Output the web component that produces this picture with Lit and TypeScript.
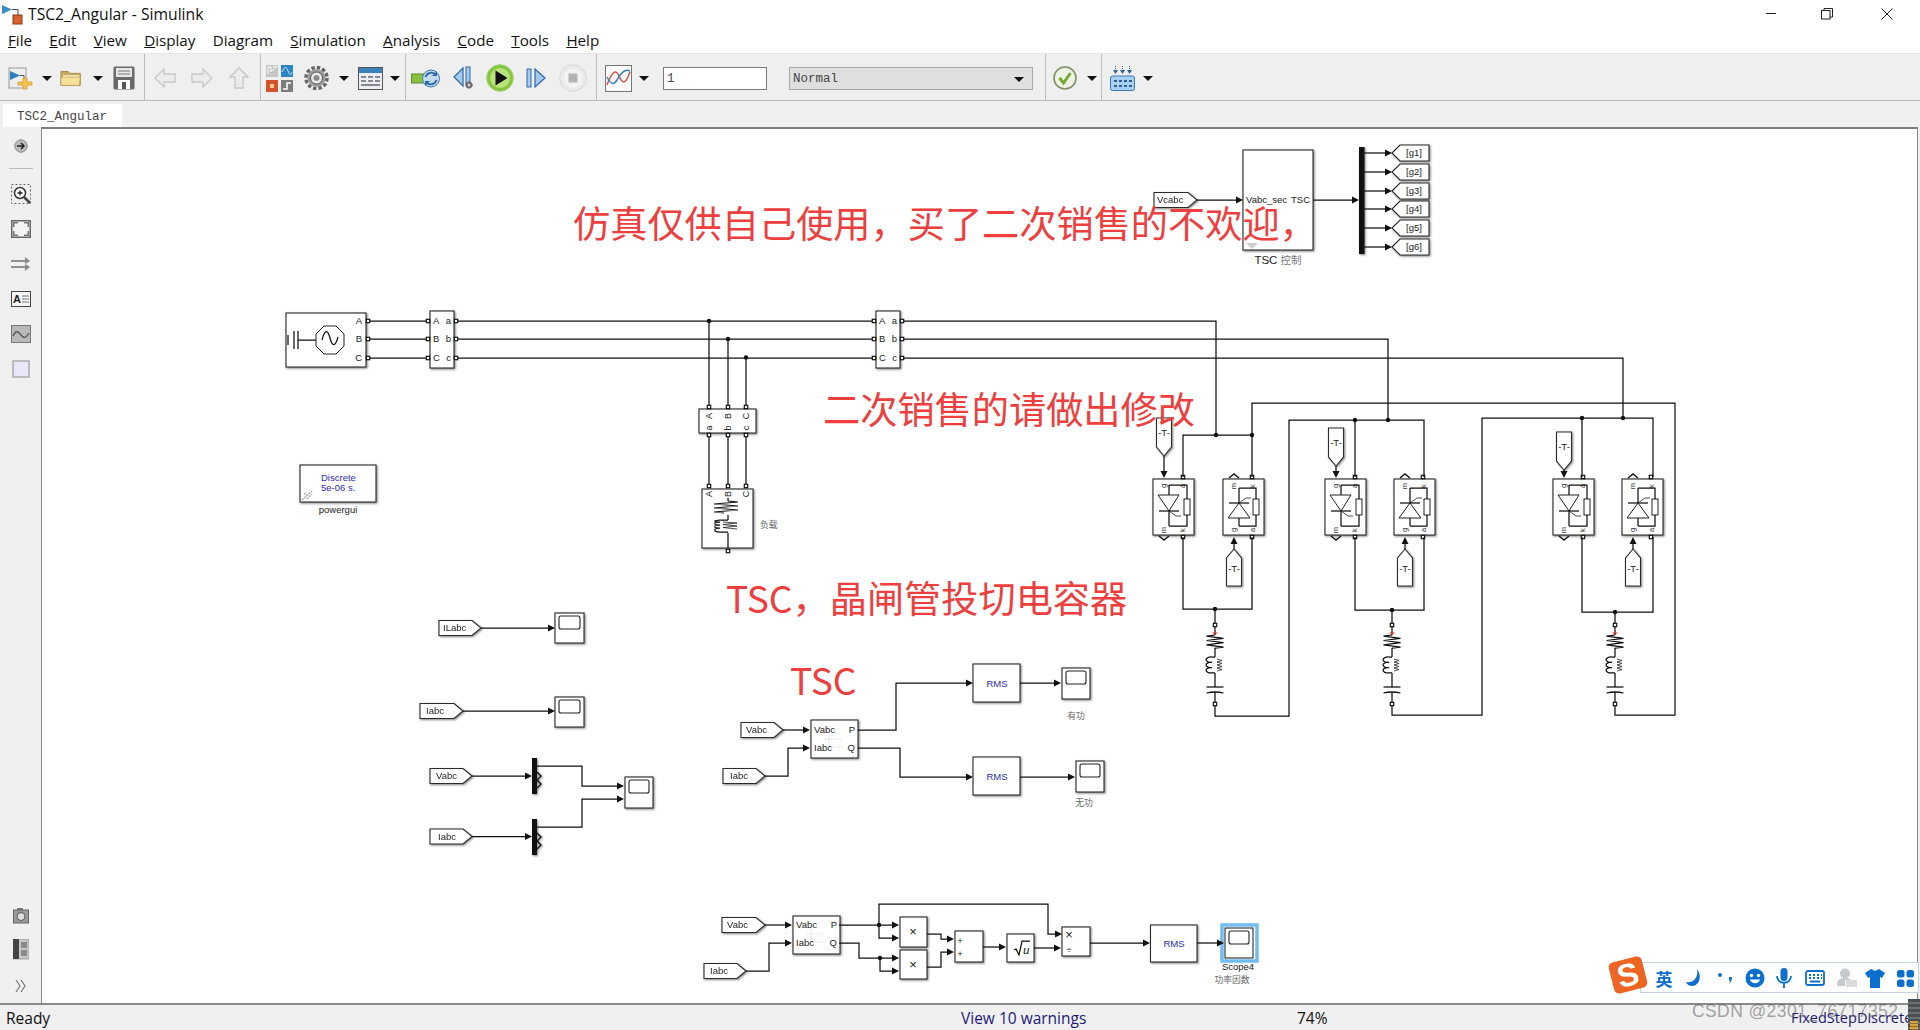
import { LitElement, html, svg, css } from 'lit'
import { customElement } from 'lit/decorators.js'

// ---- diagram helpers (page coordinates, the svg viewBox starts at the canvas corner) ----
const wire = (pts: string) => svg`<polyline class="w" points=${pts}></polyline>`
const dot = (x: number, y: number) => svg`<circle class="dot" cx=${x} cy=${y} r="2.2"></circle>`
const port = (x: number, y: number) => svg`<rect class="port" x=${x - 1.7} y=${y - 1.7} width="3.4" height="3.4"></rect>`
const arrR = (x: number, y: number) => svg`<polygon class="dot" points="${x},${y} ${x - 7},${y - 3.5} ${x - 7},${y + 3.5}"></polygon>`
const arrD = (x: number, y: number) => svg`<polygon class="dot" points="${x},${y} ${x - 3.5},${y - 7} ${x + 3.5},${y - 7}"></polygon>`
const arrU = (x: number, y: number) => svg`<polygon class="dot" points="${x},${y} ${x - 3.5},${y + 7} ${x + 3.5},${y + 7}"></polygon>`
const box = (x: number, y: number, w: number, h: number) => svg`<rect class="b" x=${x} y=${y} width=${w} height=${h}></rect>`
const txt = (x: number, y: number, s: string, cls = 't', anchor = 'start') =>
  svg`<text class=${cls} x=${x} y=${y} text-anchor=${anchor}>${s}</text>`
const rot = (x: number, y: number, s: string, size = 'r8') =>
  svg`<text class=${size} text-anchor="middle" transform="translate(${x} ${y}) rotate(-90)">${s}</text>`

const tagR = (x: number, y: number, w: number, label: string, lx: number) => svg`
  <polygon class="b" points="${x},${y - 7.5} ${x + w - 9},${y - 7.5} ${x + w},${y} ${x + w - 9},${y + 7.5} ${x},${y + 7.5}"></polygon>
  ${txt(x + lx, y + 3, label)}`
const tagL = (y: number, label: string) => svg`
  <polygon class="b" points="1391,${y} 1399,${y - 8} 1428,${y - 8} 1428,${y + 8} 1399,${y + 8}"></polygon>
  ${txt(1413, y + 3, label, 't', 'middle')}`
const scope = (x: number, y: number, w = 29, h = 30) => svg`
  ${box(x, y, w, h)}
  <rect class="scr" x=${x + 4} y=${y + 3} width=${w - 8} height="13" rx="2"></rect>`

const zig = (cx: number, y: number, hw: number, n: number, step: number) => {
  let p = `${cx},${y}`
  for (let i = 0; i < n; i++) p += ` ${cx + (i % 2 ? hw : -hw)},${y + step * (i + 0.5)}`
  return p + ` ${cx},${y + step * n}`
}

const rlc = (cx: number) => svg`
  ${port(cx, 625)}${port(cx, 704)}
  ${wire(`${cx},627 ${cx},635`)}
  <path class="plus" d="M${cx - 2.5} 633h5M${cx} 631v4"></path>
  <polyline class="w" points=${zig(cx, 635, 8.5, 6, 2.2)}></polyline>
  ${wire(`${cx},648 ${cx},657`)}
  <path class="w" d="M${cx} 657h-3a5 2.700 0 1 0 0 5.300a5 2.700 0 1 0 0 5.300a5 2.700 0 1 0 0 5.300h3"></path>
  <polyline class="thin" points=${`${cx + 2},659 ${cx + 7},660.5 ${cx + 2},662 ${cx + 7},663.5 ${cx + 2},665 ${cx + 7},666.5 ${cx + 2},668 ${cx + 7},669.5 ${cx + 2},671`}></polyline>
  ${wire(`${cx},673 ${cx},687`)}
  ${wire(`${cx - 8.5},687 ${cx + 8.5},687`)}
  <path class="w" d="M${cx - 8.5} 693q8.500 -2 17 0"></path>
  ${wire(`${cx},692 ${cx},702`)}`

// thyristor with snubber, triangle pointing down (gate tag above)
const thyDown = (x: number, tagY: number) => {
  const y = 479
  const gx = x + 11
  return svg`
  <g class="sh">
    <polygon class="b" points="${gx - 7.500},${tagY} ${gx + 7.500},${tagY} ${gx + 7.500},${tagY + 29} ${gx},${tagY + 38} ${gx - 7.500},${tagY + 29}"></polygon>
    ${box(x, y, 41, 56)}
  </g>
  ${txt(gx, tagY + 18, '-T-', 't', 'middle')}
  ${wire(`${gx},${tagY + 38} ${gx},${y - 4}`)}${arrD(gx, y - 1)}
  <path class="chev" d="M${gx - 5} ${y + 57}l5 4l5 -4"></path>
  ${rot(gx + 2, y + 7, 'g')}${rot(x + 32, y + 7, 'a')}${rot(gx + 2, y + 51, 'm')}${rot(x + 32, y + 51, 'k')}
  <polygon class="sym" points="${x + 5},${y + 16} ${x + 26},${y + 16} ${x + 16},${y + 32}"></polygon>
  ${wire(`${x + 6},${y + 32} ${x + 26},${y + 32}`)}
  ${wire(`${x + 16},${y + 6} ${x + 16},${y + 16}`)}${wire(`${x + 16},${y + 32} ${x + 16},${y + 47}`)}
  ${wire(`${x + 16},${y + 6} ${x + 34},${y + 6} ${x + 34},${y + 20}`)}
  ${wire(`${x + 34},${y + 36} ${x + 34},${y + 47} ${x + 16},${y + 47}`)}
  <rect class="sym" x=${x + 31} y=${y + 20} width="6" height="16"></rect>
  <path class="thin" d="M${x + 16} ${y + 32}l7 5h5"></path>
  ${port(x + 30, y - 2)}${port(x + 30, y + 58)}`
}

// same device turned over, gate tag below
const thyUp = (x: number) => {
  const y = 479
  const gx = x + 11
  return svg`
  <g class="sh">
    <polygon class="b" points="${gx},549 ${gx + 7.500},558 ${gx + 7.500},586 ${gx - 7.500},586 ${gx - 7.500},558"></polygon>
    ${box(x, y, 41, 56)}
  </g>
  ${txt(gx, 572, '-T-', 't', 'middle')}
  ${wire(`${gx},549 ${gx},${y + 62}`)}${arrU(gx, y + 58)}
  <path class="chev" d="M${gx - 5} ${y - 1}l5 -4l5 4"></path>
  ${rot(gx + 2, y + 7, 'm')}${rot(x + 32, y + 7, 'k')}${rot(gx + 2, y + 51, 'g')}${rot(x + 32, y + 51, 'a')}
  <polygon class="sym" points="${x + 5},${y + 39} ${x + 27},${y + 39} ${x + 16},${y + 24}"></polygon>
  ${wire(`${x + 6},${y + 24} ${x + 26},${y + 24}`)}
  ${wire(`${x + 16},${y + 9} ${x + 16},${y + 24}`)}${wire(`${x + 16},${y + 39} ${x + 16},${y + 47}`)}
  ${wire(`${x + 16},${y + 9} ${x + 33},${y + 9} ${x + 33},${y + 20}`)}
  ${wire(`${x + 33},${y + 36} ${x + 33},${y + 47} ${x + 16},${y + 47}`)}
  <rect class="sym" x=${x + 30} y=${y + 20} width="6" height="16"></rect>
  <path class="thin" d="M${x + 16} ${y + 24}l7 -5h5"></path>
  ${port(x + 29, y - 2)}${port(x + 29, y + 58)}`
}

const demuxSmall = (y: number) => svg`
  <rect class="dot" x="531" y=${y} width="5" height="36"></rect>
  <path class="chev" d="M536 ${y + 14}l4 4l-4 4l4 4l-4 4"></path>`

const pqBlock = (x: number, y: number, vy: number, qy: number) => svg`
  <g class="sh">${box(x, y, 47, qy - vy + 20)}</g>
  <path class="faint" d="M${x + 14} ${vy + 9}h16M${x + 18} ${vy + 5}v12h14"></path>
  ${txt(x + 3, vy + 3, 'Vabc')}${txt(x + 3, qy + 3, 'Iabc')}
  ${txt(x + 44, vy + 3, 'P', 't', 'end')}${txt(x + 44, qy + 3, 'Q', 't', 'end')}`

function diagram() {
  return svg`
  <!-- TSC controller and pulse tags -->
  <g class="sh">
    ${tagR(1153, 200, 43, 'Vcabc', 3)}
    ${box(1242, 150, 70, 100)}
    <rect class="dot" x="1358" y="147" width="5.500" height="107"></rect>
    ${[153, 172, 191, 209, 228, 247].map((y) => tagL(y, ''))}
  </g>
  ${[153, 172, 191, 209, 228, 247].map((y, i) => svg`
    ${wire(`1363,${y} 1386,${y}`)}${arrR(1391, y)}
    ${txt(1413, y + 3, `[g${i + 1}]`, 't', 'middle')}`)}
  ${wire('1196,200 1236,200')}${arrR(1242, 200)}
  ${wire('1312,200 1352,200')}${arrR(1358, 200)}
  ${txt(1245, 203, 'Vabc_sec')}${txt(1309, 203, 'TSC', 't', 'end')}
  <polygon class="mask" points="1245,243 1257,243 1251,249"></polygon>
  <text class="lb" x="1277" y="264" text-anchor="middle">TSC <tspan class="lbz">控制</tspan></text>

  <!-- source, breakers and three phase bus -->
  <g class="sh">
    ${box(285, 313, 80, 54)}
    ${box(429, 311, 24, 57)}
    ${box(875, 311, 24, 57)}
    ${box(698, 409, 57, 24)}
    ${box(701, 489, 51, 59)}
    ${box(299, 465, 76, 37)}
  </g>
  ${[[321, 'A', 'a'], [339, 'B', 'b'], [358, 'C', 'c']].map(([y, U, l]) => svg`
    ${txt(361, (y as number) + 3, U as string, 't', 'end')}
    ${wire(`369,${y} 426,${y}`)}${wire(`457,${y} 872,${y}`)}
    ${port(367, y as number)}${port(427, y as number)}${port(455, y as number)}${port(873, y as number)}${port(901, y as number)}
    ${txt(432, (y as number) + 3, U as string)}${txt(450, (y as number) + 3, l as string, 't', 'end')}
    ${txt(878, (y as number) + 3, U as string)}${txt(896, (y as number) + 3, l as string, 't', 'end')}`)}
  ${wire('903,321 1215,321 1215,435')}
  ${wire('903,339 1387,339 1387,420')}
  ${wire('903,358 1622,358 1622,418')}
  <path class="w" d="M287 345v-10M293 331v18M297 331v18M297 340h18"></path>
  <polygon class="sym" points="323,326 335,326 343,334 343,346 335,354 323,354 315,346 315,334"></polygon>
  <path class="w" d="M321 340c3 -12 6 -10 8 -2s5 10 8 -1"></path>

  <!-- load branch -->
  ${[[708, 'A', 'a'], [727, 'B', 'b'], [745, 'C', 'c']].map(([x, U, l]) => svg`
    ${dot(x as number, 321 + ((x as number) === 727 ? 18 : (x as number) === 745 ? 36.500 : 0))}
    ${wire(`${x},${(x as number) === 708 ? 321 : (x as number) === 727 ? 339 : 357} ${x},405`)}
    ${wire(`${x},437 ${x},484`)}
    ${port(x as number, 407)}${port(x as number, 435)}${port(x as number, 486)}
    ${rot((x as number) + 3, 416, U as string, 'r9')}${rot((x as number) + 3, 428, l as string, 'r9')}
    ${rot((x as number) + 3, 494, U as string, 'r9')}`)}
  ${port(727, 551)}
  ${wire('727,498 727,501')}
  <path class="w" d="M727 501l10 1l-24 2l24 2l-24 2l24 2l-24 2l10 1M727 515v5M727 520h-8c-7 0-7 2 0 2c-7 0-7 3 0 3c-7 0-7 3 0 3c-7 0-7 4 0 4h8M727 533v15"></path>
  <path class="thin" d="M722 522l14 1l-14 1.500l14 1.500l-14 1.500l14 1.500"></path>
  <text class="cn" x="759" y="528">负载</text>

  <!-- powergui -->
  <text class="bl" x="320" y="481">Discrete</text>
  <text class="bl" x="320" y="491">5e-06 s.</text>
  <text class="lb small" x="337" y="513" text-anchor="middle">powergui</text>
  <path class="link" d="M301 500l10 -9M303 493l3 3M306 499l5 -5"></path>

  <!-- capacitor banks -->
  ${thyDown(1152, 418)}${thyUp(1222)}
  ${thyDown(1324, 428)}${thyUp(1393)}
  ${thyDown(1552, 432)}${thyUp(1621)}
  ${wire('1182,477 1182,435 1251,435 1251,477')}
  ${wire('1251,435 1251,403 1674,403 1674,715 1614,715 1614,706')}
  ${wire('1182,537 1182,609 1251,609 1251,537')}
  ${wire('1214,609 1214,623')}
  ${wire('1214,706 1214,716 1288,716 1288,420 1423,420 1423,477')}
  ${wire('1354,420 1354,477')}
  ${wire('1354,537 1354,610 1423,610 1423,537')}
  ${wire('1391,610 1391,623')}
  ${wire('1391,706 1391,715 1481,715 1481,418 1652,418 1652,477')}
  ${wire('1581,418 1581,477')}
  ${wire('1581,537 1581,612 1652,612 1652,537')}
  ${wire('1614,612 1614,623')}
  ${[[1215, 435], [1251, 435], [1214, 609], [1354, 420], [1387, 420], [1391, 610], [1581, 418], [1622, 418], [1614, 612]].map(([x, y]) => dot(x, y))}
  ${rlc(1214)}${rlc(1391)}${rlc(1614)}

  <!-- scopes on the left -->
  <g class="sh">
    ${tagR(438, 628, 42, 'ILabc', 4)}
    ${tagR(419, 711, 43, 'Iabc', 6)}
    ${tagR(429, 776, 42, 'Vabc', 6)}
    ${tagR(429, 836.5, 42, 'Iabc', 8)}
    ${scope(554, 613)}${scope(554, 697)}${scope(624, 777, 28, 31)}
  </g>
  ${wire('480,628 548,628')}${arrR(554, 628)}
  ${wire('462,711 548,711')}${arrR(554, 711)}
  ${wire('471,776 525,776')}${arrR(531, 776)}
  ${wire('471,836.500 525,836.500')}${arrR(531, 836.5)}
  <g class="sh">${demuxSmall(758)}${demuxSmall(819)}</g>
  ${wire('536,766 581,766 581,786 617,786')}${arrR(623, 786)}
  ${wire('536,827 581,827 581,799 617,799')}${arrR(623, 799)}

  <!-- active and reactive power -->
  <g class="sh">
    ${tagR(740, 730, 42, 'Vabc', 5)}
    ${tagR(722, 776, 42, 'Iabc', 7)}
    ${box(972, 664, 47, 38)}${box(972, 757, 47, 38)}
    ${scope(1061, 668, 28, 31)}${scope(1075, 761, 28, 31)}
  </g>
  ${pqBlock(810, 720, 730, 748)}
  ${wire('782,730 803,730')}${arrR(809, 730)}
  ${wire('764,776 787,776 787,748 803,748')}${arrR(809, 748)}
  ${wire('857,730 895,730 895,683 966,683')}${arrR(972, 683)}
  ${wire('857,748 899,748 899,777 966,777')}${arrR(972, 777)}
  ${wire('1019,683 1054,683')}${arrR(1060, 683)}
  ${wire('1019,777 1068,777')}${arrR(1074, 777)}
  ${txt(996, 687, 'RMS', 'bl', 'middle')}${txt(996, 780, 'RMS', 'bl', 'middle')}
  <text class="cn" x="1075" y="719" text-anchor="middle">有功</text>
  <text class="cn" x="1083" y="806" text-anchor="middle">无功</text>

  <!-- power factor chain -->
  <g class="sh">
    ${tagR(721, 925, 43, 'Vabc', 5)}
    ${tagR(703, 971, 42, 'Iabc', 6)}
    ${box(899, 917, 27, 30)}${box(899, 950, 27, 29)}
    ${box(954, 931, 28, 31)}${box(1006, 934, 27, 28)}
    ${box(1061, 927, 28, 29)}${box(1149.5, 925, 46.5, 37)}
  </g>
  <rect class="sel" x="1221" y="925" width="35" height="36"></rect>
  ${scope(1224, 928, 28, 30)}
  ${pqBlock(792, 916, 925, 943)}
  ${wire('764,925 785,925')}${arrR(791, 925)}
  ${wire('745,971 768,971 768,943 785,943')}${arrR(791, 943)}
  ${wire('838,925 892,925')}${arrR(898, 925)}
  ${wire('878,925 878,938 892,938')}${arrR(898, 938)}
  ${wire('878,925 878,904 1047,904 1047,934 1055,934')}${arrR(1061, 934)}
  ${wire('838,943 858,943 858,958 892,958')}${arrR(898, 958)}
  ${wire('879,958 879,971 892,971')}${arrR(898, 971)}
  ${dot(878, 925)}${dot(879, 958)}
  ${wire('926,934 940,934 940,939 947,939')}${arrR(953, 939)}
  ${wire('926,967 940,967 940,952 947,952')}${arrR(953, 952)}
  ${wire('982,947 999,947')}${arrR(1005, 947)}
  ${wire('1033,948 1054,948')}${arrR(1060, 948)}
  ${wire('1089,943 1143,943')}${arrR(1149, 943)}
  ${wire('1196,943 1217,943')}${arrR(1223, 943)}
  ${txt(912, 936, '×', 'op', 'middle')}${txt(912, 969, '×', 'op', 'middle')}
  ${txt(959, 944, '+', 't', 'middle')}${txt(959, 957, '+', 't', 'middle')}
  ${txt(1068, 939, '×', 'op', 'middle')}${txt(1068, 953, '÷', 't', 'middle')}
  <path class="w" d="M1013 950l2 -1l3 6l3 -14h8"></path>
  <text class="u" x="1022" y="954">u</text>
  ${txt(1173, 947, 'RMS', 'bl', 'middle')}
  ${txt(1237, 970, 'Scope4', 't', 'middle')}
  <text class="cn" x="1231" y="983" text-anchor="middle">功率因数</text>

  <!-- annotations typed over the model -->
  <text class="note" x="572" y="238">仿真仅供自己使用，买了二次销售的不欢迎，</text>
  <text class="note" x="822" y="424">二次销售的请做出修改</text>
  <text class="note" x="725" y="613">TSC，晶闸管投切电容器</text>
  <text class="note" x="789" y="695">TSC</text>`
}

// ---- toolbar icons ----
const ic = (w: number, h: number, body: unknown) => html`<svg width=${w} height=${h} viewBox="0 0 ${w} ${h}">${body}</svg>`

const ICONS = {
  drop: ic(10, 5, svg`<path d="M0 0h10L5 5z" fill="#111"/>`),
  newModel: ic(25, 23, svg`
    <rect x="1" y="1" width="17" height="20" fill="#eee" stroke="#999"/>
    <path d="M2 4l10 4.500L2 13z" fill="#2f7fc1"/><path d="M12 8.500h4v6" fill="none" stroke="#555"/>
    <path d="M15 11h4v4h5v3h-5v4h-4v-4h-5v-3h5z" fill="#f6c64a" stroke="#c89628" stroke-width=".7"/>`),
  folder: ic(26, 18, svg`
    <path d="M1 2h8l2 2h11v13H1z" fill="#c8a860" stroke="#a58b4a"/>
    <path d="M3 6h18v10H3z" fill="#fff3c8"/><path d="M1 8h21l-1 9H1z" fill="#f6e09a" stroke="#b09653" stroke-width=".7"/>`),
  save: ic(22, 24, svg`
    <rect x=".5" y=".5" width="21" height="23" rx="1.500" fill="#6a6a6a"/>
    <rect x="3" y="2" width="16" height="9" fill="#e9e9e9"/><path d="M5 5h12M5 8h12" stroke="#777"/>
    <rect x="5" y="14" width="12" height="9" fill="#fafafa"/><rect x="9" y="16" width="4" height="7" fill="#555"/>`),
  back: ic(22, 20, svg`<path d="M1 10l9 -9v5h11v8H10v5z" fill="#ececec" stroke="#c6c6c6" stroke-width="1.300"/>`),
  forward: ic(22, 20, svg`<path d="M21 10l-9 -9v5H1v8h11v5z" fill="#ececec" stroke="#c6c6c6" stroke-width="1.300"/>`),
  up: ic(20, 22, svg`<path d="M10 1l9 9h-5v11H6V10H1z" fill="#ececec" stroke="#c6c6c6" stroke-width="1.300"/>`),
  library: ic(28, 28, svg`
    <rect x="0" y="1" width="12" height="12" fill="#c6c6c6"/><path d="M2 10V3h3v5l6 -6M7 3h3" stroke="#fff" fill="none"/>
    <rect x="15" y="1" width="12" height="12" fill="#2a86c8"/><path d="M16 8c3 -6 4 -6 6 -1s3 4 4 1" stroke="#d4ecff" fill="none"/>
    <rect x="0" y="16" width="12" height="12" fill="#d5512a"/><rect x="4" y="20" width="4" height="4" fill="#f7c98e"/>
    <rect x="15" y="16" width="12" height="12" fill="#7d7d7d"/><path d="M17 25h4v-6h4" stroke="#fff" fill="none" stroke-width="1.500"/>`),
  gear: ic(27, 26, svg`
    <circle cx="13.500" cy="13" r="10.500" fill="none" stroke="#666" stroke-width="3.500" stroke-dasharray="3.400 2.100"/>
    <circle cx="13.500" cy="13" r="9" fill="#9c9c9c"/><circle cx="13.500" cy="13" r="6" fill="#ececec" stroke="#555"/>
    <circle cx="13.500" cy="13" r="3" fill="#8a8a8a"/>`),
  table: ic(25, 23, svg`
    <rect x=".5" y=".5" width="24" height="22" fill="#eceff2" stroke="#555"/><rect x="1" y="1" width="23" height="5" fill="#3a82ba"/>
    <path d="M3 10h5M10 10h5M17 10h5M3 14h5M10 14h5M17 14h5M3 18h19" stroke="#667" stroke-width="1.500"/>`),
  record: ic(30, 23, svg`
    <rect x=".5" y="7" width="12" height="9" fill="#8cbf3f" stroke="#5f8a2a"/>
    <circle cx="20" cy="11.500" r="8.500" fill="#c4daee" stroke="#3a78b4"/>
    <path d="M14.500 10a6 6 0 0 1 10.500 -2M25.500 13a6 6 0 0 1 -10.500 2" fill="none" stroke="#2a68a8" stroke-width="1.800"/>
    <path d="M26 4v5h-5zM14 19v-5h5z" fill="#2a68a8"/>`),
  stepBack: ic(23, 24, svg`
    <path d="M10 2L1 11l9 9z" fill="#a6c9ec" stroke="#2d69a6" stroke-width="1.200"/>
    <rect x="13" y="1" width="4" height="17" fill="#a6c9ec" stroke="#2d69a6"/>
    <circle cx="16" cy="19" r="3.200" fill="#777" stroke="#555" stroke-dasharray="1.500 .8"/><circle cx="16" cy="19" r="1.200" fill="#ddd"/>`),
  play: ic(28, 28, svg`
    <circle cx="14" cy="14" r="13.300" fill="#85c540" stroke="#a5cf72"/><circle cx="14" cy="14" r="10" fill="#b9e37b"/>
    <path d="M9.500 6.500l12 7.500l-12 7.500z" fill="#111"/>`),
  stepFwd: ic(20, 20, svg`
    <rect x="1" y="1" width="4" height="18" fill="#a6c9ec" stroke="#2d69a6"/>
    <path d="M9 1l10 9l-10 9z" fill="#a6c9ec" stroke="#2d69a6" stroke-width="1.200"/>`),
  stop: ic(28, 28, svg`
    <circle cx="14" cy="14" r="13.300" fill="#ebebeb" stroke="#d7d7d7"/><circle cx="14" cy="14" r="9.500" fill="#f3f3f3"/>
    <rect x="9.500" y="9.500" width="9" height="9" fill="#b4b4b4"/>`),
  scope: ic(27, 27, svg`
    <rect x=".5" y=".5" width="26" height="26" fill="#fbfbfb" stroke="#777"/>
    <path d="M2 20C7 6 11 4 14 11s6 10 11 -4" fill="none" stroke="#d8574f" stroke-width="1.500"/>
    <path d="M2 12c4 8 7 8 10 3s7 -12 13 -9" fill="none" stroke="#3d7fc4" stroke-width="1.500"/>`),
  check: ic(24, 24, svg`
    <circle cx="12" cy="12" r="11" fill="#eef2e4" stroke="#7e8f62" stroke-width="1.600"/>
    <path d="M6.500 12l4 5l7 -10" fill="none" stroke="#74aa35" stroke-width="3"/>`),
  keyboard: ic(25, 26, svg`
    <rect x=".5" y="11" width="24" height="14.500" rx="2" fill="#a9d2f2" stroke="#3a78b4"/>
    <path d="M4 15h3v2H4zM9 15h3v2H9zM14 15h3v2h-3zM19 15h3v2h-3zM4 20h3v2H4zM9 20h3v2H9zM14 20h3v2h-3zM19 20h3v2h-3z" fill="#2a5f98"/>
    <path d="M5.500 1v3M12.500 1v3M19.500 1v3" stroke="#2a5f98" stroke-width="1" stroke-dasharray="1 1"/>
    <path d="M3 5h5l-2.500 4zM10 5h5l-2.500 4zM17 5h5l-2.500 4z" fill="#2a5f98"/>`),
}

type Slot = { w: number; icon: keyof typeof ICONS }
const s = (w: number, icon: keyof typeof ICONS): Slot => ({ w, icon })
const GROUPS: { pad: string; slots: Slot[] }[] = [
  { pad: 'g1', slots: [s(28, 'newModel'), s(26, 'drop'), s(24, 'folder'), s(28, 'drop'), s(24, 'save')] },
  { pad: 'g2', slots: [s(40, 'back'), s(34, 'forward'), s(40, 'up')] },
  { pad: 'g2', slots: [s(38, 'library'), s(34, 'gear'), s(22, 'drop'), s(30, 'table'), s(19, 'drop')] },
  { pad: 'g4', slots: [s(40, 'record'), s(36, 'stepBack'), s(36, 'play'), s(36, 'stepFwd'), s(38, 'stop')] },
]

const SIDE_ICONS = {
  nav: ic(14, 14, svg`<circle cx="7" cy="7" r="6.200" fill="#bbb" stroke="#888"/><path d="M3 7h6M7 4l3 3l-3 3" fill="none" stroke="#222" stroke-width="1.500"/>`),
  zoom: ic(20, 20, svg`
    <rect x=".5" y=".5" width="19" height="19" fill="none" stroke="#666" stroke-dasharray="2 2"/>
    <circle cx="9" cy="9" r="5.500" fill="#fff" stroke="#333" stroke-width="1.500"/><path d="M6.500 9h5M9 6.500v5" stroke="#222" stroke-width="1.300"/>
    <path d="M13 13l6 6" stroke="#444" stroke-width="2.500"/>`),
  fit: ic(20, 18, svg`
    <rect width="20" height="18" fill="#666"/><rect x="1.500" y="1.500" width="17" height="15" fill="#f4f4f4"/>
    <path d="M2 2h5v1.500H3.500V7H2zM18 2h-5v1.500h3.500V7H18zM2 16h5v-1.500H3.500V11H2zM18 16h-5v-1.500h3.500V11H18z" fill="#777"/>`),
  arrows: ic(20, 14, svg`<path d="M0 4h15M0 10h15" stroke="#333" stroke-width="1.200"/><path d="M14 0l5 4l-5 3zM14 7l5 3l-5 4z" fill="#888"/>`),
  anno: ic(20, 16, svg`
    <rect x=".5" y=".5" width="19" height="15" fill="#f5f5f5" stroke="#444"/>
    <text x="2" y="12" font-family="Liberation Sans" font-weight="700" font-size="11" fill="#222">A</text>
    <path d="M11 5h7M11 8h7M11 11h7" stroke="#777"/>`),
  image: ic(20, 18, svg`
    <rect x=".5" y=".5" width="19" height="17" fill="#b9b9b9" stroke="#777"/>
    <path d="M2 11c3 -6 5 -5 8 -1s5 3 8 -2" fill="none" stroke="#555" stroke-width="1.300"/>`),
  area: ic(18, 18, svg`<rect x="1" y="1" width="16" height="16" fill="#e7e7f9" stroke="#aaa" stroke-width="1.500"/>`),
  camera: ic(16, 18, svg`
    <rect x=".5" y="3" width="15" height="13" fill="#9a9a9a" stroke="#666"/><rect x="4" y="1" width="6" height="3" fill="#777"/>
    <circle cx="8" cy="9.500" r="4" fill="#ddd" stroke="#555"/>`),
  browser: ic(16, 24, svg`
    <g transform="translate(0 -3)"><rect x="0" y="3" width="16" height="20" fill="#c8c8c8" stroke="#777" stroke-width=".6"/><rect x="0" y="3" width="6" height="20" fill="#444"/>
    <rect x="8" y="6" width="6" height="6" fill="#8a8a8a"/><rect x="8" y="14" width="6" height="6" fill="#8a8a8a"/></g>`),
  more: ic(12, 14, svg`<path d="M1 1l4 6l-4 6M6 1l4 6l-4 6" fill="none" stroke="#777" stroke-width="1.200"/>`),
}

@customElement('app-root')
export class AppRoot extends LitElement {
  static styles = css`
    :host {
      display: flex;
      flex-direction: column;
      position: relative;
      height: 100vh;
      overflow: hidden;
      background: #f0f0f0;
      font-family: 'Open Sans', 'Noto Sans', sans-serif;
      color: #111;
    }
    .titlebar {
      display: flex;
      align-items: center;
      height: 27px;
      padding: 0 3px 0 2px;
      box-sizing: border-box;
      background: #fff;
      font-size: 15.700px;
    }
    .titlebar .logo {
      margin-right: 5px;
      margin-top: 6px;
    }
    .winbtns {
      margin-left: auto;
      display: flex;
    }
    .winbtn {
      width: 60px;
      display: flex;
      justify-content: center;
    }
    .winbtn.min {
      width: 52px;
    }
    .menubar {
      display: flex;
      height: 26px;
      align-items: center;
      padding-left: 8px;
      background: #fff;
      font-size: 15.200px;
    }
    .menubar span {
      margin-right: 17.300px;
    }
    .toolbar {
      display: flex;
      height: 48px;
      padding-top: 2px;
      background: #efefef;
      border-top: 1px solid #e4e4e4;
      border-bottom: 1px solid #b9b9b9;
      box-sizing: border-box;
      align-items: stretch;
    }
    .group {
      display: flex;
      align-items: center;
      border-right: 1px solid #bdbdbd;
      margin-top: -2px;
      padding-top: 2px;
    }
    .group.g1 {
      padding-left: 6px;
      padding-right: 8px;
    }
    .group.g2 {
      padding-right: 1px;
    }
    .group.g4 {
      padding-right: 4px;
    }
    .slot {
      display: flex;
      align-items: center;
      justify-content: center;
      height: 100%;
    }
    .field {
      box-sizing: border-box;
      height: 23px;
      font-family: 'Liberation Mono', monospace;
      font-size: 12.500px;
      color: #444;
      display: flex;
      align-items: center;
      padding: 2px 0 0 3px;
    }
    .stoptime {
      width: 104px;
      margin-left: 14px;
      background: #fff;
      border: 1px solid #7a7a7a;
    }
    .mode {
      width: 244px;
      margin: 0 12px 0 22px;
      background: #dfdfdf;
      border: 1px solid #a8a8a8;
      justify-content: space-between;
      padding-right: 8px;
    }
    .tabs {
      height: 26px;
      display: flex;
      align-items: flex-end;
      padding-left: 3px;
    }
    .tab {
      width: 119px;
      height: 23px;
      box-sizing: border-box;
      background: #fff;
      font-family: 'Liberation Mono', monospace;
      font-size: 12.500px;
      color: #444;
      padding: 6px 0 0 14px;
    }
    .main {
      flex: 1;
      display: flex;
      min-height: 0;
      padding-right: 2px;
      border-bottom: 2px solid #8a8a8a;
    }
    .side {
      width: 41px;
      flex: none;
      display: flex;
      flex-direction: column;
      align-items: center;
      padding-top: 1px;
    }
    .side .it {
      height: 35px;
      display: flex;
      align-items: center;
      justify-content: center;
    }
    .side hr {
      width: 24px;
      margin: 5px 0 7px;
      border: none;
      border-top: 1px solid #bbb;
    }
    .foot {
      margin-top: auto;
      display: flex;
      flex-direction: column;
      align-items: center;
    }
    .canvas {
      flex: 1;
      min-width: 0;
      border: 1px solid #8a8a8a;
      border-top: 2px solid #7f7f7f;
      border-bottom: none;
      background: #fff;
    }
    .canvas svg {
      display: block;
      width: 100%;
      height: 100%;
    }
    .status {
      height: 25px;
      display: grid;
      grid-template-columns: 955px 336px 494px 1fr;
      align-items: center;
      padding-left: 6px;
      font-size: 15.500px;
      white-space: nowrap;
      overflow: hidden;
    }
    .link-text {
      color: #1a1a78;
    }
    .fixed {
      font-size: 14.500px;
    }
    .watermark {
      position: absolute;
      left: 1692px;
      top: 1001px;
      font-family: 'Liberation Sans', sans-serif;
      font-size: 17.500px;
      letter-spacing: 0.4px;
      color: rgba(90, 90, 90, 0.55);
      white-space: nowrap;
    }
    .grip {
      position: absolute;
      right: 0;
      bottom: 0;
      width: 12px;
      height: 31px;
      background: repeating-linear-gradient(#4a5052 0 3px, #6b7072 3px 5px);
    }
    .grip::after {
      content: '';
      position: absolute;
      left: 2px;
      right: 2px;
      bottom: 0;
      height: 9px;
      background: repeating-linear-gradient(#d9a43c 0 2px, #8a6f35 2px 3px);
    }
    .tray {
      position: absolute;
      left: 1640px;
      top: 962px;
      width: 279px;
      height: 31px;
      box-sizing: border-box;
      background: #fff;
      border: 1px solid #c6d4e2;
      display: flex;
      align-items: center;
      color: #0b6fd0;
    }
    .tray .ti {
      position: absolute;
      top: 3px;
      width: 24px;
      height: 24px;
      display: flex;
      align-items: center;
      justify-content: center;
    }
    .tray .en {
      font-family: 'Noto Sans CJK SC', sans-serif;
      font-weight: 700;
      font-size: 17px;
    }
    .slogo {
      position: absolute;
      left: 1611px;
      top: 959px;
      width: 34px;
      height: 32px;
      border-radius: 5px;
      background: #ee6423;
      transform: rotate(-14deg);
      color: #fff;
      font: 700 32px 'Liberation Sans', sans-serif;
      display: flex;
      align-items: center;
      justify-content: center;
    }

    /* diagram */
    .w,
    .thin,
    .chev,
    .plus,
    .link,
    .faint {
      fill: none;
    }
    .w {
      stroke: #111;
      stroke-width: 1.25;
    }
    .thin {
      stroke: #222;
      stroke-width: 0.8;
    }
    .chev {
      stroke: #111;
      stroke-width: 1.4;
    }
    .plus {
      stroke: #c0392b;
      stroke-width: 1;
    }
    .link {
      stroke: #aaa;
      stroke-width: 1.500;
      stroke-dasharray: 2 1;
    }
    .faint {
      stroke: #ccc;
      stroke-width: 0.8;
      stroke-dasharray: 1.500 1.500;
    }
    .dot {
      fill: #111;
    }
    .port {
      fill: #fff;
      stroke: #111;
      stroke-width: 1.200;
    }
    .b {
      fill: #fff;
      stroke: #2b2b2b;
      stroke-width: 1.100;
    }
    .sym {
      fill: #fff;
      stroke: #222;
      stroke-width: 1;
    }
    .scr {
      fill: #fff;
      stroke: #222;
      stroke-width: 1.100;
    }
    .sel {
      fill: none;
      stroke: #6fbdf2;
      stroke-width: 3.500;
    }
    .mask {
      fill: #cfcfcf;
    }
    .sh {
      filter: drop-shadow(1.500px 1.500px 1px rgba(0, 0, 0, 0.5));
    }
    text {
      font-family: 'Liberation Sans', 'Noto Sans CJK SC', sans-serif;
    }
    .t,
    .lb {
      font-size: 9.500px;
      fill: #222;
    }
    .lb {
      font-size: 11.500px;
    }
    .lb.small {
      font-size: 9.500px;
    }
    .lbz {
      fill: #777;
      font-family: 'Noto Sans CJK SC', sans-serif;
      font-size: 10.500px;
    }
    .r8 {
      font-size: 7.500px;
      fill: #333;
    }
    .r9 {
      font-size: 9px;
      fill: #222;
    }
    .op {
      font-size: 13px;
      fill: #222;
    }
    .bl {
      font-size: 9.500px;
      fill: #2b2bb0;
    }
    .cn {
      font-family: 'Noto Sans CJK SC', sans-serif;
      font-size: 8.800px;
      fill: #666;
    }
    .u {
      font-family: 'Liberation Serif', serif;
      font-style: italic;
      font-size: 13px;
      fill: #222;
    }
    .note {
      font-family: 'Noto Sans CJK SC', sans-serif;
      font-size: 37.200px;
      fill: #ee3e3e;
    }
  `

  private renderGroup(g: { pad: string; slots: Slot[] }) {
    return html`<div class="group ${g.pad}">
      ${g.slots.map((t) => html`<div class="slot" style="width:${t.w}px">${ICONS[t.icon]}</div>`)}
    </div>`
  }

  private renderTray() {
    // x is the left edge of the 24px icon cell, in page pixels
    const at = (x: number, body: unknown) => html`<div class="ti" style="left:${x - 1641}px">${body}</div>`
    return html`
      <div class="tray">
        ${at(1652, html`<span class="en">英</span>`)}
        ${at(1683, ic(20, 20, svg`<path d="M12 1c5 6 3 16 -4 17c-3 .3 -6 -1 -7 -4c7 2 13 -5 11 -13z" fill="#0b6fd0"/>`))}
        ${at(1713, ic(16, 14, svg`<circle cx="3" cy="4" r="2" fill="#0b6fd0"/><path d="M12 6h3c0 3 -1 5 -3 7c1 -2 1 -3 0 -4z" fill="#0b6fd0"/>`))}
        ${at(1743, ic(20, 20, svg`<circle cx="10" cy="10" r="9.500" fill="#0b6fd0"/><circle cx="6.500" cy="7.500" r="1.700" fill="#fff"/><circle cx="13.500" cy="7.500" r="1.700" fill="#fff"/><path d="M5 11.500h10c-1 5 -9 5 -10 0z" fill="#fff"/>`))}
        ${at(1772, ic(18, 21, svg`<rect x="5.500" y="0" width="7" height="13" rx="3.500" fill="#0b6fd0"/><path d="M2 8c0 9 14 9 14 0M9 15v5" fill="none" stroke="#0b6fd0" stroke-width="1.800"/>`))}
        ${at(1803, ic(20, 16, svg`<rect x="1" y="1" width="18" height="14" rx="2" fill="none" stroke="#0b6fd0" stroke-width="1.800"/><path d="M4 5h2M8 5h2M12 5h2M16 5h1M4 8h2M8 8h2M12 8h2M16 8h1M5 11.500h10" stroke="#0b6fd0" stroke-width="1.800"/>`))}
        ${at(1835, ic(22, 20, svg`<circle cx="9" cy="5.500" r="5" fill="#c4c9cc"/><path d="M1 18c0 -7 4 -8 8 -8s5 1 6 2H9v6z" fill="#c4c9cc"/><rect x="10" y="12" width="11" height="7" fill="#d9dcde"/>`))}
        ${at(1863, ic(20, 19, svg`<path d="M6 0l4 2l4 -2l6 4l-3 5l-2 -1v11H5V8L3 9L0 4z" fill="#0b6fd0"/>`))}
        ${at(1893, ic(17, 17, svg`<rect x="0" y="0" width="7.500" height="7.500" rx="2.500" fill="#0b6fd0"/><rect x="9.500" y="0" width="7.500" height="7.500" rx="2.500" fill="#0b6fd0"/><rect x="0" y="9.500" width="7.500" height="7.500" rx="2.500" fill="#0b6fd0"/><rect x="9.500" y="9.500" width="7.500" height="7.500" rx="2.500" fill="#0b6fd0"/>`))}
      </div>
      <div class="slogo">S</div>`
  }

  render() {
    return html`
      <div class="titlebar">
        <span class="logo">${ic(21, 21, svg`
          <path d="M0 1l10 4.500L0 10z" fill="#3a8ccb"/><path d="M10 5.500h6v6" fill="none" stroke="#444"/>
          <rect x="11" y="11" width="9" height="9" fill="#d9602c" stroke="#8a3a18"/>`)}</span>
        <span>TSC2_Angular - Simulink</span>
        <div class="winbtns">
          <div class="winbtn min">${ic(11, 11, svg`<path d="M0 5.500h10" stroke="#222"/>`)}</div>
          <div class="winbtn">${ic(12, 12, svg`<rect x=".5" y="2.500" width="8.500" height="8.500" fill="none" stroke="#222"/><path d="M3 2.500V.5h8.500V9H9" fill="none" stroke="#222"/>`)}</div>
          <div class="winbtn">${ic(12, 12, svg`<path d="M.5 .5l11 11M11.500 .5l-11 11" stroke="#222"/>`)}</div>
        </div>
      </div>
      <div class="menubar">
        <span><u>F</u>ile</span><span><u>E</u>dit</span><span><u>V</u>iew</span><span><u>D</u>isplay</span><span>Dia<u>g</u>ram</span><span><u>S</u>imulation</span><span><u>A</u>nalysis</span><span><u>C</u>ode</span><span><u>T</u>ools</span><span><u>H</u>elp</span>
      </div>
      <div class="toolbar">
        ${GROUPS.map((g) => this.renderGroup(g))}
        <div class="group">
          <div class="slot" style="width:42px">${ICONS.scope}</div>
          <div class="slot" style="width:10px">${ICONS.drop}</div>
          <div class="field stoptime">1</div>
          <div class="field mode"><span>Normal</span>${ICONS.drop}</div>
        </div>
        <div class="group">
          <div class="slot" style="width:38px">${ICONS.check}</div>
          <div class="slot" style="width:16px">${ICONS.drop}</div>
          <div style="width:1px"></div>
        </div>
        <div class="group" style="border:none">
          <div class="slot" style="width:40px">${ICONS.keyboard}</div>
          <div class="slot" style="width:12px">${ICONS.drop}</div>
        </div>
      </div>
      <div class="tabs"><div class="tab">TSC2_Angular</div></div>
      <div class="main">
        <div class="side">
          <div class="it">${SIDE_ICONS.nav}</div>
          <hr />
          <div class="it">${SIDE_ICONS.zoom}</div>
          <div class="it">${SIDE_ICONS.fit}</div>
          <div class="it">${SIDE_ICONS.arrows}</div>
          <div class="it">${SIDE_ICONS.anno}</div>
          <div class="it">${SIDE_ICONS.image}</div>
          <div class="it">${SIDE_ICONS.area}</div>
          <div class="foot">
            <div class="it">${SIDE_ICONS.camera}</div>
            <div class="it">${SIDE_ICONS.browser}</div>
            <div class="it">${SIDE_ICONS.more}</div>
          </div>
        </div>
        <div class="canvas">
          <svg viewBox="41 129 1875 874" preserveAspectRatio="xMinYMin meet">${diagram()}</svg>
        </div>
      </div>
      <div class="status">
        <span>Ready</span>
        <span class="link-text">View 10 warnings</span>
        <span>74%</span>
        <span class="link-text fixed">FixedStepDiscrete</span>
      </div>
      <div class="watermark">CSDN @2301_76717352</div>
      <div class="grip"></div>
      ${this.renderTray()}
    `
  }
}
